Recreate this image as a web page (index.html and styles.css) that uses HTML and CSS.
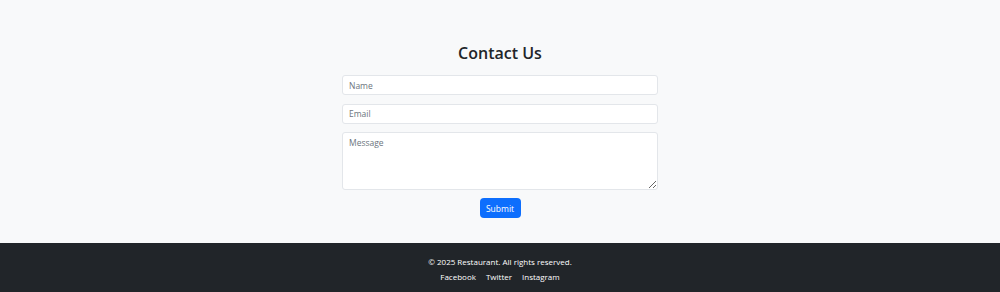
FILE: index.html
```html
<!DOCTYPE html>
<html lang="en">
<head>
<meta charset="utf-8">
<title>Contact Us</title>
<link rel="stylesheet" href="styles.css">
</head>
<body>
<main class="contact">
  <h2 class="title">Contact Us</h2>
  <form class="form">
    <input class="field" type="text" placeholder="Name">
    <input class="field" type="email" placeholder="Email">
    <textarea class="field area" placeholder="Message"></textarea>
    <button class="btn" type="button">Submit</button>
  </form>
</main>
<footer class="footer">
  <p class="copy">© 2025 Restaurant. All rights reserved.</p>
  <nav class="links">
    <a href="#">Facebook</a>
    <a href="#">Twitter</a>
    <a href="#">Instagram</a>
  </nav>
</footer>
</body>
</html>
```
FILE: styles.css
```css
html, body {
  margin: 0;
  padding: 0;
  height: 100%;
}
body {
  background: #f8f9fa;
  font-family: "Open Sans", "Noto Sans", sans-serif;
  color: #212529;
  display: flex;
  flex-direction: column;
}
.contact {
  width: 316px;
  margin: 0 auto;
  padding: 40px 0 25px;
  display: flex;
  flex-direction: column;
  align-items: center;
}
.title {
  margin: 0 0 9px;
  font-size: 16px;
  line-height: 26px;
  font-weight: 600;
  color: #212529;
}
.form {
  width: 100%;
  display: flex;
  flex-direction: column;
  align-items: center;
}
.field {
  box-sizing: border-box;
  width: 100%;
  height: 20px;
  margin: 0 0 8.5px;
  padding: 0 6px;
  border: 1px solid #e3e6ea;
  border-radius: 3px;
  background: #fff;
  font-family: inherit;
  font-size: 8.5px;
  color: #212529;
  outline: none;
}
.field::placeholder {
  color: #6c757d;
}
.area {
  height: 58px;
  padding: 4px 6px;
  margin-bottom: 8px;
  resize: vertical;
  line-height: 12px;
}
.btn {
  height: 20px;
  width: 41px;
  padding: 0;
  border: none;
  border-radius: 4px;
  background: #0d6efd;
  color: #fff;
  font-family: inherit;
  font-size: 8.5px;
  cursor: pointer;
}
.footer {
  flex: 1;
  background: #212529;
  color: #fff;
  text-align: center;
  padding: 11px 0 8px;
  font-size: 8px;
  line-height: 15px;
}
.copy {
  margin: 0;
}
.links {
  display: flex;
  justify-content: center;
  gap: 10px;
}
.links a {
  color: #fff;
  text-decoration: none;
}
```
